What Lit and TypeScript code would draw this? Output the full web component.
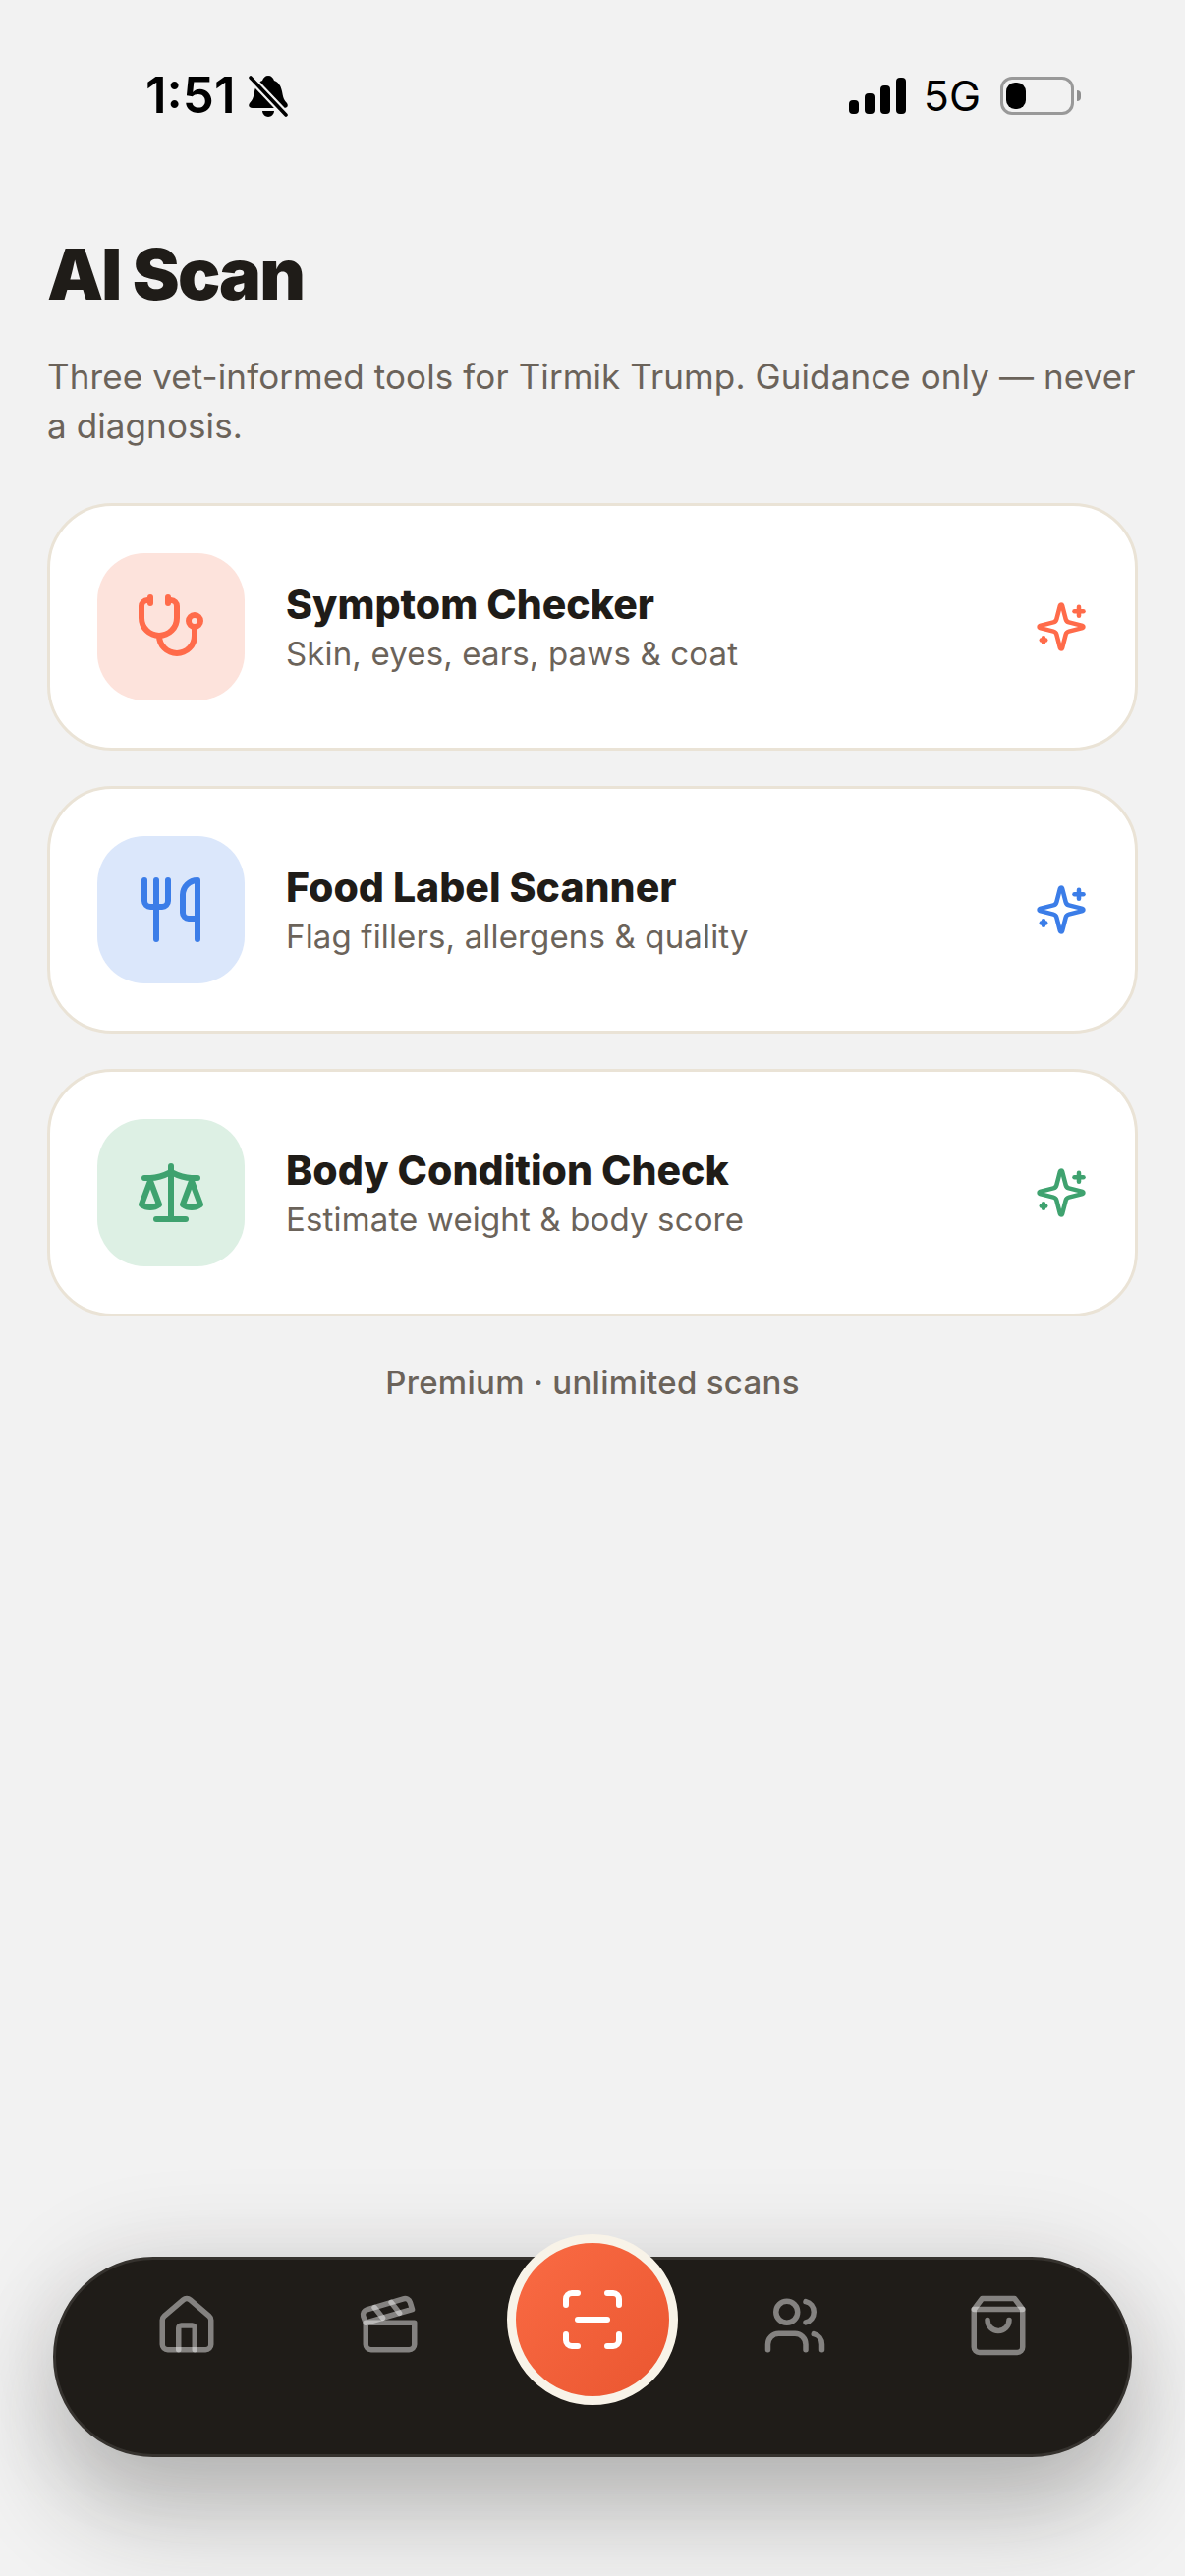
import { LitElement, html, css, svg, TemplateResult } from "lit";
import { customElement } from "lit/decorators.js";

const icons: Record<string, TemplateResult> = {
  stethoscope: svg`<path d="M11 2v2"/><path d="M5 2v2"/><path d="M5 3H4a2 2 0 0 0-2 2v4a6 6 0 0 0 12 0V5a2 2 0 0 0-2-2h-1"/><path d="M8 15a6 6 0 0 0 12 0v-3"/><circle cx="20" cy="10" r="2"/>`,
  utensils: svg`<path d="M3 2v7c0 1.1.9 2 2 2h4a2 2 0 0 0 2-2V2"/><path d="M7 2v20"/><path d="M21 15V2a5 5 0 0 0-5 5v6c0 1.1.9 2 2 2h3Zm0 0v7"/>`,
  scale: svg`<path d="m16 16 3-8 3 8c-.87.65-1.92 1-3 1s-2.13-.35-3-1Z"/><path d="m2 16 3-8 3 8c-.87.65-1.92 1-3 1s-2.13-.35-3-1Z"/><path d="M7 21h10"/><path d="M12 3v18"/><path d="M3 7h2c2 0 5-1 7-2 2 1 5 2 7 2h2"/>`,
  sparkles: svg`<path d="M9.937 15.5A2 2 0 0 0 8.5 14.063l-6.135-1.582a.5.5 0 0 1 0-.962L8.5 9.936A2 2 0 0 0 9.937 8.5l1.582-6.135a.5.5 0 0 1 .963 0L14.063 8.5A2 2 0 0 0 15.5 9.937l6.135 1.581a.5.5 0 0 1 0 .964L15.5 14.063a2 2 0 0 0-1.437 1.437l-1.582 6.135a.5.5 0 0 1-.963 0z"/><path d="M20 3v4"/><path d="M22 5h-4"/><path d="M4 17v2"/><path d="M5 18H3"/>`,
  house: svg`<path d="M15 21v-8a1 1 0 0 0-1-1h-4a1 1 0 0 0-1 1v8"/><path d="M3 10a2 2 0 0 1 .709-1.528l7-5.999a2 2 0 0 1 2.582 0l7 5.999A2 2 0 0 1 21 10v9a2 2 0 0 1-2 2H5a2 2 0 0 1-2-2z"/>`,
  clapper: svg`<path d="M20.2 6 3 11l-.9-2.4c-.3-1.1.3-2.2 1.3-2.5l13.5-4c1.1-.3 2.2.3 2.5 1.3Z"/><path d="m6.2 5.3 3.1 3.9"/><path d="m12.4 3.4 3.1 4"/><path d="M3 11h18v8a2 2 0 0 1-2 2H5a2 2 0 0 1-2-2Z"/>`,
  users: svg`<path d="M16 21v-2a4 4 0 0 0-4-4H6a4 4 0 0 0-4 4v2"/><circle cx="9" cy="7" r="4"/><path d="M22 21v-2a4 4 0 0 0-3-3.87"/><path d="M16 3.13a4 4 0 0 1 0 7.75"/>`,
  bag: svg`<path d="M6 2 3 6v14a2 2 0 0 0 2 2h14a2 2 0 0 0 2-2V6l-3-4Z"/><path d="M3 6h18"/><path d="M16 10a4 4 0 0 1-8 0"/>`,
  scan: svg`<path d="M3 7V5a2 2 0 0 1 2-2h2"/><path d="M17 3h2a2 2 0 0 1 2 2v2"/><path d="M21 17v2a2 2 0 0 1-2 2h-2"/><path d="M7 21H5a2 2 0 0 1-2-2v-2"/><path d="M7 12h10"/>`,
};

const icon = (name: string, cls: string) => html`<svg
  class=${cls}
  viewBox="0 0 24 24"
  fill="none"
  stroke="currentColor"
  stroke-width="2"
  stroke-linecap="round"
  stroke-linejoin="round"
>
  ${icons[name]}
</svg>`;

const tools = [
  { name: "Symptom Checker", sub: "Skin, eyes, ears, paws & coat", icon: "stethoscope", tone: "coral" },
  { name: "Food Label Scanner", sub: "Flag fillers, allergens & quality", icon: "utensils", tone: "blue" },
  { name: "Body Condition Check", sub: "Estimate weight & body score", icon: "scale", tone: "green" },
];

@customElement("app-root")
class AppRoot extends LitElement {
  public render(): TemplateResult {
    return html`
      <div class="page">
        <div class="status">
          <div class="status-left">
            <span class="time">1:51</span>
            <svg class="bell" viewBox="0 0 40 43">
              <path d="M20 1c3 0 5 2 6 5 5 2 7 6 8 11 1 6 2 9 5 12 2 3 0 5-3 5H4c-3 0-5-2-3-5 3-3 4-6 5-12 1-5 3-9 8-11 1-3 3-5 6-5Z" fill="#000" />
              <path d="M14 37h12c0 3-3 6-6 6s-6-3-6-6Z" fill="#000" />
              <path d="M1 2l38 40" stroke="#f2f2f2" stroke-width="8" />
              <path d="M2 3l36 38" stroke="#000" stroke-width="3.6" stroke-linecap="round" />
            </svg>
          </div>
          <div class="status-right">
            <svg class="signal" viewBox="0 0 58 37">
              <rect x="0" y="23" width="10" height="14" rx="4" />
              <rect x="16" y="16" width="10" height="21" rx="4" />
              <rect x="32" y="8" width="10" height="29" rx="4" />
              <rect x="48" y="0" width="10" height="37" rx="4" />
            </svg>
            <span class="net">5G</span>
            <div class="battery"><div class="charge"></div></div>
            <div class="nub"></div>
          </div>
        </div>

        <main class="content">
          <h1>AI Scan</h1>
          <p class="lead">
            Three vet-informed tools for Tirmik Trump. Guidance only — never a diagnosis.
          </p>
          <div class="cards">
            ${tools.map(
              (t) => html`
                <div class="card ${t.tone}">
                  <div class="tile">${icon(t.icon, "tile-icon")}</div>
                  <div class="text">
                    <div class="name">${t.name}</div>
                    <div class="sub">${t.sub}</div>
                  </div>
                  ${icon("sparkles", "spark")}
                </div>
              `
            )}
          </div>
          <p class="note">Premium · unlimited scans</p>
        </main>

        <nav class="nav">
          <div class="slot">${icon("house", "nav-icon")}</div>
          <div class="slot">${icon("clapper", "nav-icon")}</div>
          <div class="slot"></div>
          <div class="slot">${icon("users", "nav-icon")}</div>
          <div class="slot">${icon("bag", "nav-icon")}</div>
          <button class="fab">${icon("scan", "fab-icon")}</button>
        </nav>
      </div>
    `;
  }

  static styles = css`
    :host {
      display: block;
      font-family: Inter, "Liberation Sans", sans-serif;
    }

    .page {
      display: flex;
      flex-direction: column;
      box-sizing: border-box;
      height: 2622px;
      overflow: hidden;
      background: #f2f2f2;
      color: #1f1c18;
    }

    .status {
      display: flex;
      justify-content: space-between;
      align-items: center;
      box-sizing: border-box;
      height: 194px;
      padding: 48px 106px 48px 148px;
      color: #000;
    }

    .status-left,
    .status-right {
      display: flex;
      align-items: center;
    }

    .time {
      font-size: 51px;
      font-weight: 600;
      line-height: 50px;
    }

    .bell {
      width: 40px;
      height: 43px;
      margin-left: 14px;
    }

    .signal {
      width: 58px;
      height: 37px;
      fill: #000;
    }

    .net {
      font-size: 43px;
      font-weight: 400;
      line-height: 44px;
      margin-left: 18px;
    }

    .battery {
      box-sizing: border-box;
      width: 75px;
      height: 39px;
      margin-left: 20px;
      padding: 3px;
      border: 3px solid #999;
      border-radius: 12px;
    }

    .charge {
      width: 20px;
      height: 27px;
      background: #000;
      border-radius: 9px;
    }

    .nub {
      width: 4px;
      height: 11px;
      margin-left: 3px;
      background: #8e8e8e;
      border-radius: 0 6px 6px 0;
    }

    .content {
      flex: 1;
      padding: 0 48px;
    }

    h1 {
      margin: 40px 0 0;
      font-size: 72px;
      line-height: 90px;
      font-weight: 900;
      letter-spacing: -1.9px;
      color: #1f1c18;
    }

    .lead {
      margin: 34px 0 0;
      font-size: 35px;
      line-height: 50px;
      letter-spacing: 0.1px;
      color: #6b635a;
    }

    .cards {
      display: flex;
      flex-direction: column;
      gap: 36px;
      margin-top: 54px;
    }

    .card {
      display: flex;
      align-items: center;
      box-sizing: border-box;
      height: 252px;
      padding: 0 48px;
      background: #fff;
      border: 3px solid #eae3d6;
      border-radius: 66px;
    }

    .tile {
      display: flex;
      align-items: center;
      justify-content: center;
      width: 150px;
      height: 150px;
      flex: none;
      border-radius: 48px;
    }

    .tile-icon {
      width: 72px;
      height: 72px;
    }

    .text {
      flex: 1;
      margin-left: 42px;
      padding-top: 4px;
    }

    .name {
      font-size: 41px;
      line-height: 50px;
      font-weight: 800;
      color: #1f1c18;
    }

    .sub {
      font-size: 33px;
      line-height: 50px;
      color: #6b635a;
      letter-spacing: 0.15px;
    }

    .spark {
      width: 54px;
      height: 54px;
      flex: none;
    }

    .coral { color: #ff6b4a; }
    .coral .tile { background: #fde3dc; }
    .blue { color: #3b7de8; }
    .blue .tile { background: #dbe7fb; }
    .green { color: #3fa26f; }
    .green .tile { background: #ddf0e4; }

    .note {
      margin: 44px 0 0;
      text-align: center;
      font-size: 33px;
      line-height: 46px;
      font-weight: 500;
      letter-spacing: 0.3px;
      color: #6b635a;
    }

    .nav {
      position: relative;
      display: grid;
      grid-template-columns: repeat(5, 1fr);
      box-sizing: border-box;
      height: 204px;
      margin: 0 54px 121px;
      padding: 34px 30px 0;
      background: #1f1c18;
      border: 3px solid #35322e;
      border-radius: 102px;
      box-shadow:
        0 60px 100px rgba(31, 28, 24, 0.24),
        0 0 100px rgba(31, 28, 24, 0.12);
    }

    .slot {
      display: flex;
      justify-content: center;
    }

    .nav-icon {
      width: 66px;
      height: 66px;
      color: #fff;
      stroke-opacity: 0.45;
    }

    .fab {
      position: absolute;
      left: 459px;
      top: -26px;
      display: flex;
      align-items: center;
      justify-content: center;
      box-sizing: border-box;
      width: 174px;
      height: 174px;
      padding: 0;
      border: 9px solid #f8f3e8;
      border-radius: 50%;
      background: linear-gradient(135deg, #fa6b44, #ea5630);
      color: #fff;
    }

    .fab-icon {
      width: 72px;
      height: 72px;
    }
  `;
}

export { AppRoot };
